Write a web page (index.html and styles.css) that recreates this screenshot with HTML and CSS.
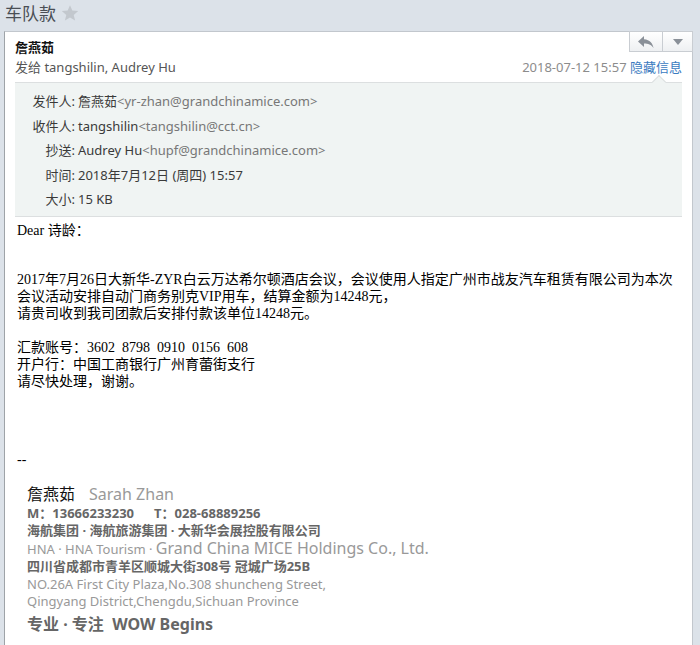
FILE: index.html
```html
<!DOCTYPE html>
<html lang="zh-CN">
  <head>
    <meta charset="UTF-8" />
    <title>车队款</title>
    <link rel="stylesheet" href="styles.css">
  </head>
  <body>
    <div class="subject">
      <span class="subject-text">车队款</span>
      <svg class="star" width="18" height="18" viewBox="0 0 24 24"><path d="M12 1.5l3.1 7.2 7.8.6-5.9 5.2 1.8 7.6L12 18.1l-6.8 4 1.8-7.6-5.9-5.2 7.8-.6z" fill="#c3c8ce"/></svg>
    </div>

    <div class="mail">
      <!-- header -->
      <div class="mail-head">
        <div class="actions">
          <button class="act act-reply">
            <svg width="18" height="14" viewBox="0 0 18 14"><path d="M7 1L1 6.5 7 12V8.6c4.2 0 7 .9 9.5 4.4-.8-5-3.6-8.3-9.5-8.8z" fill="#8a9098"/></svg>
          </button>
          <button class="act act-more">
            <svg width="12" height="8" viewBox="0 0 12 8"><path d="M1 1h10L6 7z" fill="#8a9098"/></svg>
          </button>
        </div>
        <div class="from-name">詹燕茹</div>
        <div class="head-line">
          <span class="to">发给 tangshilin, Audrey Hu</span>
          <span class="when">2018-07-12 15:57 <a class="toggle">隐藏信息</a></span>
        </div>
      </div>

      <!-- details -->
      <div class="details">
        <span class="notch"></span>
        <div class="row"><span class="lbl">发件人:</span><span>詹燕茹<em>&lt;yr-zhan@grandchinamice.com&gt;</em></span></div>
        <div class="row"><span class="lbl">收件人:</span><span>tangshilin<em>&lt;tangshilin@cct.cn&gt;</em></span></div>
        <div class="row"><span class="lbl">抄送:</span><span>Audrey Hu<em>&lt;hupf@grandchinamice.com&gt;</em></span></div>
        <div class="row"><span class="lbl">时间:</span><span>2018年7月12日 (周四) 15:57</span></div>
        <div class="row"><span class="lbl">大小:</span><span>15 KB</span></div>
      </div>

      <!-- body -->
      <div class="mail-body">
        <p>Dear 诗龄：</p>
        <p class="gap2">2017年7月26日大新华-ZYR白云万达希尔顿酒店会议，会议使用人指定广州市战友汽车租赁有限公司为本次<br>会议活动安排自动门商务别克VIP用车，结算金额为14248元，<br>请贵司收到我司团款后安排付款该单位14248元。</p>
        <p class="gap1">汇款账号：3602&nbsp; 8798&nbsp; 0910&nbsp; 0156&nbsp; 608<br>开户行：中国工商银行广州育蕾街支行<br>请尽快处理，谢谢。</p>
        <p class="sep">--</p>

        <div class="sign">
          <div class="sign-name">詹燕茹<span class="en">Sarah Zhan</span></div>
          <div class="sign-b">M：13666233230<span class="tel">T：028-68889256</span></div>
          <div class="sign-b">海航集团 · 海航旅游集团 · 大新华会展控股有限公司</div>
          <div class="sign-g">HNA · HNA Tourism · <span class="big">Grand China MICE Holdings Co., Ltd.</span></div>
          <div class="sign-b">四川省成都市青羊区顺城大街308号 冠城广场25B</div>
          <div class="sign-g">NO.26A First City Plaza,No.308 shuncheng Street,<br>Qingyang District,Chengdu,Sichuan Province</div>
          <div class="motto">专业 · 专注&nbsp; WOW Begins</div>
        </div>
      </div>
    </div>
  </body>
</html>
```

FILE: styles.css
```css
body {
  margin: 0;
  background-color: #dce2e9;
  font-family: "Noto Sans", "Noto Sans CJK SC", sans-serif;
  font-size: 13px;
  color: #333;
  overflow: hidden;
}

.subject {
  height: 31px;
  padding: 0 5px;
  display: flex;
  align-items: center;
  gap: 5px;
}

.subject-text {
  font-size: 17px;
  color: #4a4f55;
  margin-top: -6px;
}

.star {
  margin-top: -6px;
}

.mail {
  margin-left: 4px;
  width: 687px;
  height: 640px;
  background-color: #fff;
  border: 1px solid #c2c7cd;
  border-left-color: #9ea3a8;
  border-bottom: none;
}

.mail-head {
  position: relative;
  padding: 5px 10px 0 10px;
}

.actions {
  position: absolute;
  top: -1px;
  right: -1px;
  display: flex;
}

.act {
  height: 21px;
  padding: 0;
  margin: 0;
  border: 1px solid #c9cdd2;
  background: linear-gradient(#ffffff, #eef0f2);
  display: flex;
  align-items: center;
  justify-content: center;
}

.act-reply {
  width: 34px;
}

.act-more {
  width: 30px;
  border-left: none;
}

.from-name {
  font-weight: bold;
  font-size: 13px;
  color: #111;
  line-height: 20px;
}

.head-line {
  display: flex;
  justify-content: space-between;
  line-height: 20px;
  color: #555;
}

.when {
  color: #8c8c8c;
}

.toggle {
  color: #3b7bbf;
  cursor: pointer;
}

.details {
  position: relative;
  margin: 5px 10px 0 10px;
  padding: 6px 0 4px 0;
  background-color: #f0f4f3;
  border-top: 1px solid #dcdfe0;
  border-bottom: 1px solid #dcdfe0;
}

.notch {
  position: absolute;
  top: -6px;
  right: 18px;
  width: 9px;
  height: 9px;
  background-color: #f0f4f3;
  border-top: 1px solid #dcdfe0;
  border-left: 1px solid #dcdfe0;
  transform: rotate(45deg);
}

.row {
  display: flex;
  gap: 3px;
  line-height: 24.5px;
  color: #3a3a3a;
}

.row .lbl {
  width: 60px;
  text-align: right;
}

.row em {
  font-style: normal;
  color: #777;
}

.mail-body {
  padding: 5px 12px;
  font-family: "Liberation Serif", "Noto Sans CJK SC", serif;
  font-size: 14px;
  line-height: 17px;
  color: #000;
  white-space: nowrap;
}

.mail-body p {
  margin: 0;
}

.gap2 {
  margin-top: 32px !important;
}

.gap1 {
  margin-top: 17px !important;
}

.sep {
  margin-top: 61px !important;
}

.sign {
  margin-top: 15px;
  padding-left: 10px;
  font-family: "Noto Sans", "Noto Sans CJK SC", sans-serif;
  color: #777;
  font-size: 13px;
  line-height: 17.5px;
}

.sign-name {
  font-size: 16px;
  color: #111;
  line-height: 22px;
}

.sign-name .en {
  margin-left: 14px;
  color: #999;
}

.sign-b {
  font-weight: bold;
  color: #666;
}

.tel {
  margin-left: 20px;
}

.sign-g {
  color: #999;
}

.sign-g .big {
  font-size: 16px;
}

.motto {
  margin-top: 5px;
  font-size: 16px;
  font-weight: bold;
  color: #666;
}
```
